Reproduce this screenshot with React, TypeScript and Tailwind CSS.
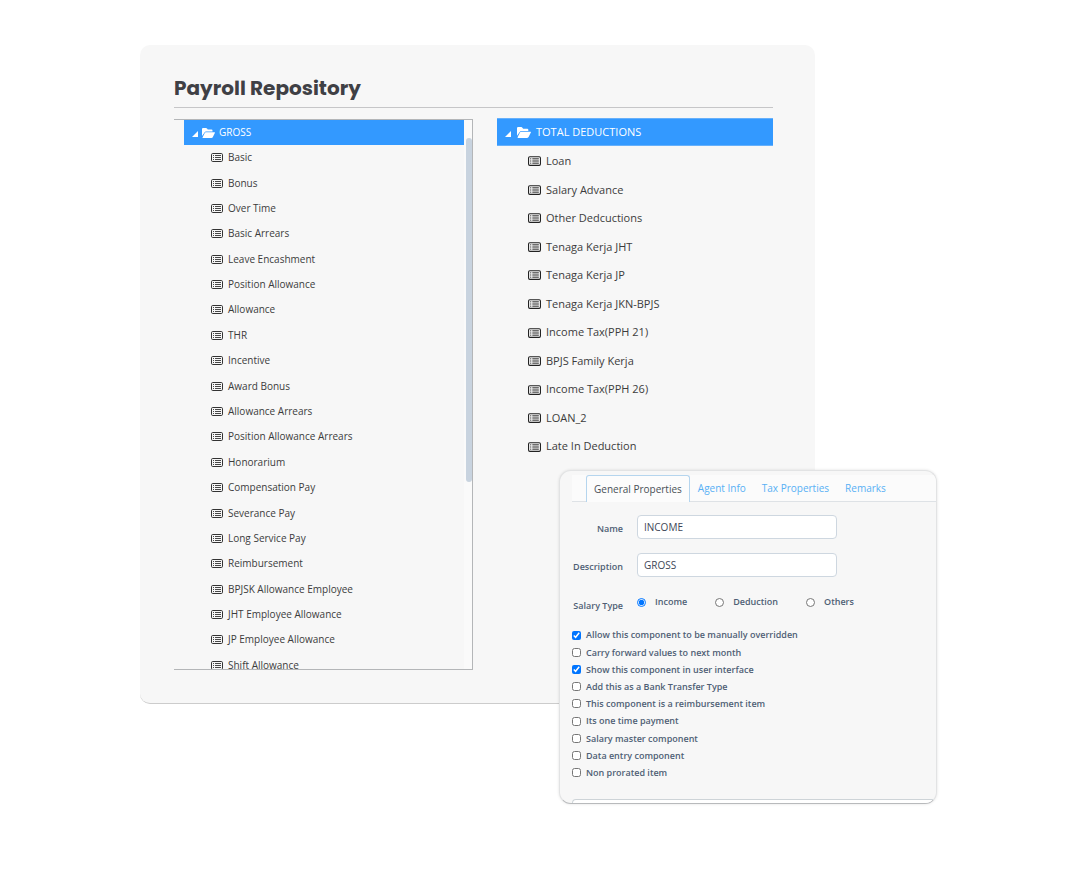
import React from "react";

const grossItems = [
  "Basic",
  "Bonus",
  "Over Time",
  "Basic Arrears",
  "Leave Encashment",
  "Position Allowance",
  "Allowance",
  "THR",
  "Incentive",
  "Award Bonus",
  "Allowance Arrears",
  "Position Allowance Arrears",
  "Honorarium",
  "Compensation Pay",
  "Severance Pay",
  "Long Service Pay",
  "Reimbursement",
  "BPJSK Allowance Employee",
  "JHT Employee Allowance",
  "JP Employee Allowance",
  "Shift Allowance",
];

const deductionItems = [
  "Loan",
  "Salary Advance",
  "Other Dedcuctions",
  "Tenaga Kerja JHT",
  "Tenaga Kerja JP",
  "Tenaga Kerja JKN-BPJS",
  "Income Tax(PPH 21)",
  "BPJS Family Kerja",
  "Income Tax(PPH 26)",
  "LOAN_2",
  "Late In Deduction",
];

const tabs = ["General Properties", "Agent Info", "Tax Properties", "Remarks"];

const fields = [
  { id: "name", label: "Name", value: "INCOME" },
  { id: "description", label: "Description", value: "GROSS" },
];

const salaryTypes = ["Income", "Deduction", "Others"];

const settings = [
  { label: "Allow this component to be manually overridden", checked: true },
  { label: "Carry forward values to next month", checked: false },
  { label: "Show this component in user interface", checked: true },
  { label: "Add this as a Bank Transfer Type", checked: false },
  { label: "This component is a reimbursement item", checked: false },
  { label: "Its one time payment", checked: false },
  { label: "Salary master component", checked: false },
  { label: "Data entry component", checked: false },
  { label: "Non prorated item", checked: false },
];

const Caret = () => (
  <svg viewBox="0 0 6 6" className="w-[6px] h-[6px] mt-[3px] shrink-0" fill="currentColor">
    <path d="M6 0v6H0z" />
  </svg>
);

const FolderIcon = ({ className }: { className: string }) => (
  <svg viewBox="0 0 26 20" className={className} fill="currentColor">
    <path d="M0 16V2Q0 0 2 0H8Q9 0 10 1L11.500 3H19Q21 3 21 5V7H8Q6 7 5 9Z" />
    <path d="M7.500 8.500H25Q26.500 8.500 25.700 10L21.500 18.500Q20.800 20 19 20H2Q0.500 20 1.300 18.500L5.500 10Q6.200 8.500 7.500 8.500Z" />
  </svg>
);

const ListIcon = ({ className }: { className: string }) => (
  <svg viewBox="0 0 12 9" className={className} fill="none" stroke="currentColor">
    <rect x="0.5" y="0.5" width="11" height="8" rx="1.2" />
    <path d="M2 2.500H3M2 4.500H3M2 6.500H3M4 2.500H10M4 4.500H10M4 6.500H10" strokeWidth="0.900" />
  </svg>
);

const GrossTree = () => (
  <div className="flex h-[551px] overflow-hidden border border-l-0 border-[#b4b6b8] pl-[10px]">
    <div className="flex-1 text-[10px] text-[#3c3c3c]">
      <button className="flex h-[25px] w-full items-center bg-[#3399ff] pl-2 text-white">
        <Caret />
        <FolderIcon className="ml-[4px] mr-1 h-[10px] w-[13px]" />
        GROSS
      </button>
      <ul className="grid h-[533px] auto-rows-fr pl-[27px]">
        {grossItems.map((item) => (
          <li key={item} className="flex items-center gap-x-[5px]">
            <ListIcon className="h-[9px] w-[12px] text-[#333]" />
            {item}
          </li>
        ))}
      </ul>
    </div>
    <div className="w-2 shrink-0 bg-[#fafafa] pl-[2px] pt-[18px]">
      <div className="h-[344px] rounded-full bg-[#c8d3df]" />
    </div>
  </div>
);

const DeductionTree = () => (
  <div className="-mt-px text-[11px] text-[#3c3c3c]">
    <button className="flex h-[28px] w-full items-center border-y border-[#66b0fb] bg-[#3399ff] pl-2 text-white">
      <Caret />
      <FolderIcon className="ml-[6px] mr-[5px] h-[11px] w-[14px]" />
      TOTAL DEDUCTIONS
    </button>
    <ul className="grid h-[315px] auto-rows-fr pl-[31px] pt-px">
      {deductionItems.map((item) => (
        <li key={item} className="flex items-center gap-x-[5px]">
          <ListIcon className="h-[10px] w-[13px] text-[#222]" />
          {item}
        </li>
      ))}
    </ul>
  </div>
);

const PropertiesCard = () => (
  <div className="absolute right-0 top-[425px] flex h-[334px] w-[378px] flex-col overflow-hidden rounded-[12px] border border-[#e2e3e4] border-b-[#b8babc] bg-[#f7f7f7] pl-3 pt-1 font-semibold text-[#4f5f75] shadow-[0_0_3px_rgba(0,0,0,0.12)]">
    <div role="tablist" className="flex h-[27px] shrink-0 border-b border-[#dee2e6] bg-[#fbfbfb] pl-[14px] text-[10px] font-normal">
      {tabs.map((tab, index) => (
        <button
          key={tab}
          role="tab"
          aria-selected={index === 0}
          className={
            index === 0
              ? "h-[27px] rounded-t-[3px] border border-b-0 border-[#b5d5ee] bg-[#fcfcfc] px-[7px] text-[#495057]"
              : "px-2 text-[#58b0f5]"
          }
        >
          {tab}
        </button>
      ))}
    </div>

    <form className="text-[9px]">
      <div className="flex flex-col gap-y-[14px] pt-[13px]">
        {fields.map((field) => (
          <div key={field.id} className="flex items-center">
            <label htmlFor={field.id} className="w-[51px] pt-1 text-right">
              {field.label}
            </label>
            <input
              id={field.id}
              defaultValue={field.value}
              className="ml-[14px] h-[24px] w-[200px] rounded-[4px] border border-[#ced7e0] bg-white px-[6px] text-[10px] font-normal text-[#3d4656]"
            />
          </div>
        ))}
      </div>

      <fieldset className="mt-[18px] flex">
        <legend className="float-left w-[51px] pt-[4px] text-right">Salary Type</legend>
        <div className="ml-[14px] flex gap-x-[28px]">
          {salaryTypes.map((type, index) => (
            <label key={type} className="flex h-[14px] items-center gap-x-[9px]">
              <input type="radio" name="salaryType" defaultChecked={index === 0} className="size-[9px]" />
              {type}
            </label>
          ))}
        </div>
      </fieldset>

      <div className="mt-[14px] grid h-[155px] auto-rows-fr">
        {settings.map((item) => (
          <label key={item.label} className="flex items-center gap-x-[5px]">
            <input type="checkbox" defaultChecked={item.checked} className="size-[9px]" />
            {item.label}
          </label>
        ))}
      </div>
    </form>

    <div className="mt-auto h-[4px] shrink-0 rounded-tl-[4px] border-l border-t border-[#ced4d8] bg-white" />
  </div>
);

const App = () => {
  return (
    <div className="min-h-screen bg-white px-[4%] pt-[45px] font-['Open_Sans','Noto_Sans',sans-serif]">
      <div className="relative mx-auto max-w-[797px] -translate-x-[2px]">
        <div className="mr-[122px] rounded-[10px] border-b border-[#cccccc] bg-[#f7f7f7] pb-[33px] pl-[34px] pr-[42px] pt-[29px]">
          <h1 className="border-b border-[#c6c6c8] pb-[4px] font-['Poppins','Inter',sans-serif] text-[20px] leading-[29px] font-bold text-[#3f4045]">
            Payroll Repository
          </h1>
          <div className="mt-[11px] grid grid-cols-[299fr_276fr] gap-6">
            <GrossTree />
            <DeductionTree />
          </div>
        </div>
        <PropertiesCard />
      </div>
    </div>
  );
};

export default App;
